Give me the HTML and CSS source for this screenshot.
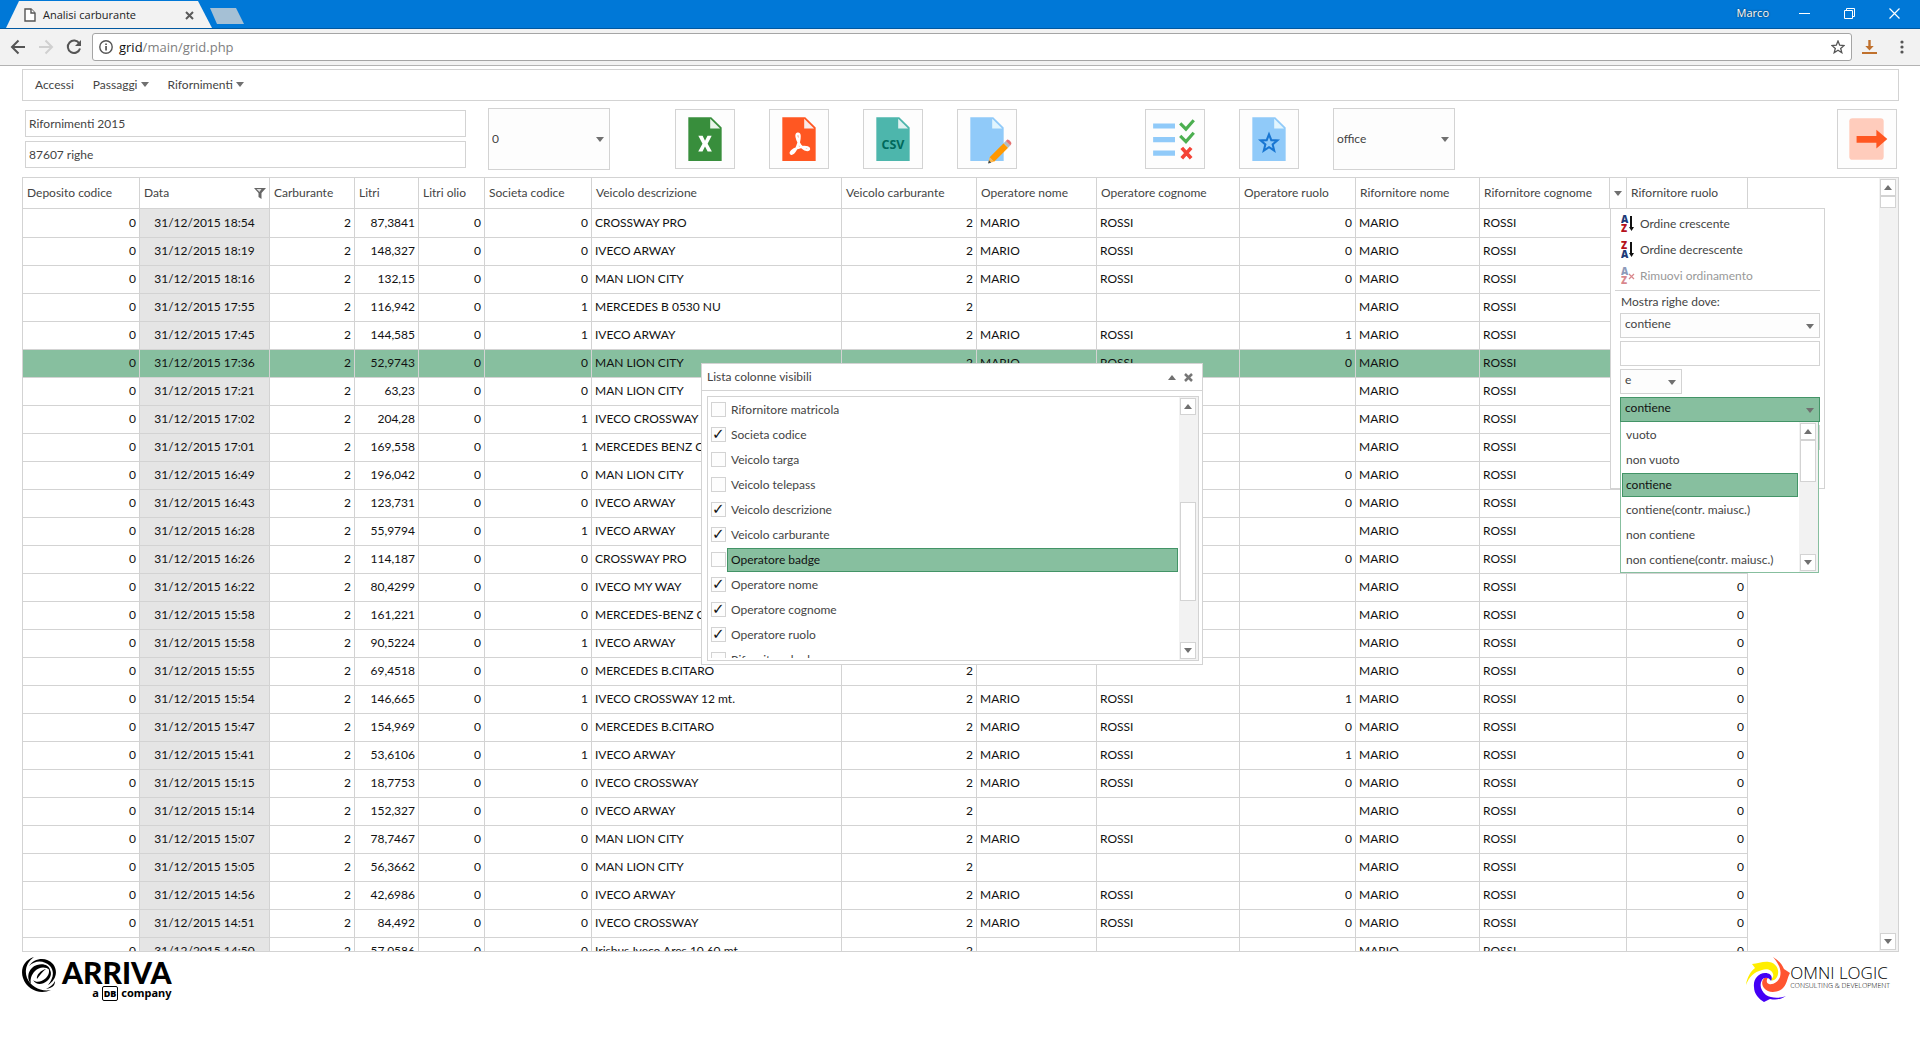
FILE: index.html
```html
<!DOCTYPE html>
<html lang="it">
<head>
<meta charset="utf-8">
<title>Analisi carburante</title>
<link rel="stylesheet" href="styles.css">
</head>
<body>
<header class="browser">
  <div class="tabstrip">
    <div class="tab">
      <svg width="12" height="14" viewBox="0 0 12 14" fill="#fff" stroke="#555" stroke-width="1.4"><path d="M1 1h6l4 4v8H1z"/><path d="M7 1v4h4" /></svg>
      <span>Analisi carburante</span>
      <button class="plain" aria-label="Chiudi scheda"><svg width="9" height="9" viewBox="0 0 9 9" stroke="#5a5a5a" stroke-width="2"><path d="M1 1l7 7M8 1L1 8"/></svg></button>
    </div>
    <button class="new-tab" aria-label="Nuova scheda"></button>
    <div class="window-controls">
      <span class="user">Marco</span>
      <button class="plain" aria-label="Riduci"><svg width="11" height="11" viewBox="0 0 11 11" stroke="#fff"><path d="M0 5.5h11"/></svg></button>
      <button class="plain" aria-label="Ripristina"><svg width="11" height="11" viewBox="0 0 11 11" fill="none" stroke="#fff"><path d="M.5 2.500h8v8h-8zM2.500 2.500v-2h8v8h-2"/></svg></button>
      <button class="plain" aria-label="Chiudi"><svg width="11" height="11" viewBox="0 0 11 11" stroke="#fff" stroke-width="1.200"><path d="M.5.5l10 10M10.500.5l-10 10"/></svg></button>
    </div>
  </div>
  <div class="navbar">
    <button class="plain" aria-label="Indietro"><svg width="16" height="16" viewBox="0 0 16 16" fill="none" stroke="#555" stroke-width="2"><path d="M15 8H2M8.500 1.500L2 8l6.500 6.500"/></svg></button>
    <button class="plain" aria-label="Avanti"><svg width="16" height="16" viewBox="0 0 16 16" fill="none" stroke="#d0d0d0" stroke-width="2"><path d="M1 8h13M7.500 1.500L14 8l-6.500 6.500"/></svg></button>
    <button class="plain" aria-label="Ricarica"><svg width="16" height="16" viewBox="0 0 16 16"><path d="M13.300 4.500A6.200 6.200 0 1 0 14 9.500" fill="none" stroke="#555" stroke-width="2"/><path d="M15 1v6H9z" fill="#555"/></svg></button>
    <div class="address">
      <svg width="14" height="14" viewBox="0 0 14 14"><circle cx="7" cy="7" r="6.200" fill="none" stroke="#555" stroke-width="1.400"/><path d="M6.200 6h1.700v4.500H6.200zM6.200 3.400h1.700V5H6.200z" fill="#555"/></svg>
      <span class="url"><b>grid</b>/main/grid.php</span>
      <button class="plain" aria-label="Preferiti"><svg width="14" height="14" viewBox="0 0 14 14" fill="none" stroke="#555" stroke-width="1.300"><path d="M7 1l1.700 4.200 4.400.3-3.400 2.900 1.100 4.300L7 10.300l-3.800 2.400 1.100-4.300L.9 5.500l4.400-.3z"/></svg></button>
    </div>
    <button class="plain" aria-label="Download"><svg width="15" height="14" viewBox="0 0 15 14" fill="#c0712d"><path d="M6.300 0h2.400v6h3L7.500 10.500 3.300 6h3zM0 12h15v2H0z"/></svg></button>
    <button class="plain menu-dots" aria-label="Menu"><svg width="4" height="14" viewBox="0 0 4 14" fill="#555"><circle cx="2" cy="2" r="1.600"/><circle cx="2" cy="7" r="1.600"/><circle cx="2" cy="12" r="1.600"/></svg></button>
  </div>
</header>

<main class="page">
  <nav class="menu">
    <a href="#accessi">Accessi</a>
    <a href="#passaggi" class="has-sub">Passaggi</a>
    <a href="#rifornimenti" class="has-sub">Rifornimenti</a>
  </nav>

  <section class="toolbar">
    <div class="titles">
      <input type="text" value="Rifornimenti 2015" aria-label="Titolo">
      <input type="text" value="87607 righe" aria-label="Numero righe">
    </div>
    <div class="combo combo-tall"><select aria-label="Livello"><option>0</option></select></div>
    <div class="tools tools-export">
      <button class="tool" aria-label="Excel"><svg viewBox="0 0 48 48"><path fill="#388e3c" d="M40 45H8V3h22l10 10z"/><path fill="#e8f5e9" d="M38.500 14H29V4.500z"/><path fill="#fff" d="M21.600 25.600l2.400-4.700h4L24.100 28.500l4.100 7.500h-4.100L24 35.800l-2.400-4.500L19.200 36H15.100l4.100-7.500-4-7.600h4.100z" transform="translate(2.400 0)"/></svg></button>
      <button class="tool" aria-label="PDF"><svg viewBox="0 0 48 48"><path fill="#ff5722" d="M40 45H8V3h22l10 10z"/><path fill="#fbe9e7" d="M38.500 14H29V4.500z"/><path fill="none" stroke="#fff" stroke-width="2.300" stroke-linejoin="round" d="M23.800 27.500c-2-4-3.200-8-1-8.600 2.300-.4 2 4 1 8.100-1.300 4.500-4.400 11.300-7 11.200-2.300-.9 1.300-4.300 5.500-5.500 4-1.300 9.900-1.800 11.200.3.800 2-3.200 2.300-6-.4-1.500-1.500-2.700-3-3.700-5.100z"/></svg></button>
      <button class="tool" aria-label="CSV"><svg viewBox="0 0 48 48"><path fill="#4db6ac" d="M40 45H8V3h22l10 10z"/><path fill="#e0f2f1" d="M38.500 14H29V4.500z"/><text x="24" y="34" text-anchor="middle" class="csv">CSV</text></svg></button>
      <button class="tool" aria-label="Modifica"><svg viewBox="0 0 48 48"><path fill="#90caf9" d="M40 45H8V3h22l10 10z"/><path fill="#e1f5fe" d="M38.500 14H29V4.500z"/><path fill="#ff9800" d="M26.500 41.500L40 28l4.300 4.300-13.500 13.500z"/><path fill="#b0bec5" d="M40 28l2-2 4.300 4.300-2 2z"/><path fill="#e57373" d="M42 26l1.300-1.300c1-1 4.700 2.500 4 4L46.300 30.300z"/><path fill="#ffb74d" d="M26.500 41.500L25.300 47l5.500-1.200z"/><path fill="#37474f" d="M25.900 44.500L25 47.500l3-.8z"/></svg></button>
    </div>
    <div class="tools tools-view">
      <button class="tool" aria-label="Colonne visibili"><svg viewBox="0 0 48 48"><path fill="#90caf9" d="M3 9h21v5H3zM3 22h21v5H3zM3 35h21v5H3z"/><g fill="none" stroke-width="3"><path stroke="#4caf50" d="M29 9l5.500 5.500L42 6M29 21l5.500 5.500L42 18"/><path stroke="#f44336" stroke-width="3.500" d="M30.500 32.500l9 10M39.500 32.500l-9 10"/></g></svg></button>
      <button class="tool" aria-label="Preferiti"><svg viewBox="0 0 48 48"><path fill="#90caf9" d="M40 45H8V3h22l10 10z"/><path fill="#e1f5fe" d="M38.500 14H29V4.500z"/><path fill="none" stroke="#1976d2" stroke-width="2" d="M24 19.500l2.200 5.600 5.800.3-4.500 3.800 1.500 5.900-5-3.300-5 3.300 1.500-5.900-4.500-3.800 5.800-.3z"/></svg></button>
    </div>
    <div class="combo combo-tall"><select aria-label="Tema"><option>office</option></select></div>
    <button class="tool tool-exit" aria-label="Esci"><svg viewBox="0 0 48 48"><rect x="7" y="4" width="33" height="40" rx="3" fill="#ffccbc"/><path fill="#ff5722" d="M43.500 24L33 15v6H14v6.500h19V33z"/></svg></button>
  </section>

  <section class="grid">
    <div class="grid-body">
      <table>
        <colgroup id="cols"></colgroup>
        <thead><tr id="heads"></tr></thead>
        <tbody id="rows"></tbody>
      </table>
    </div>
    <div class="scrollbar grid-scroll">
      <button class="up" aria-label="Su"></button><div class="thumb"></div><button class="down" aria-label="Giù"></button>
    </div>

    <div class="column-menu">
      <ul class="sort">
        <li><button><svg width="14" height="18" viewBox="0 0 14 18"><text x="0" y="8" class="az a">A</text><text x="0" y="17" class="az z">Z</text><path d="M10 1v12" stroke="#111" stroke-width="2"/><path d="M8 12h5l-2.500 4z" fill="#111"/></svg>Ordine crescente</button></li>
        <li><button><svg width="14" height="18" viewBox="0 0 14 18"><text x="0" y="8" class="az z">Z</text><text x="0" y="17" class="az a">A</text><path d="M10 1v12" stroke="#111" stroke-width="2"/><path d="M8 12h5l-2.500 4z" fill="#111"/></svg>Ordine decrescente</button></li>
        <li><button disabled><svg width="14" height="18" viewBox="0 0 14 18"><text x="0" y="8" class="az a">A</text><text x="0" y="17" class="az z">Z</text><path d="M8 7l5 5M13 7l-5 5" stroke="#b5121b" stroke-width="1.200"/></svg>Rimuovi ordinamento</button></li>
      </ul>
      <form class="filter">
        <label for="cond1">Mostra righe dove:</label>
        <div class="combo"><select id="cond1"><option>contiene</option></select></div>
        <input type="text" aria-label="Valore">
        <div class="combo combo-small"><select aria-label="Operatore"><option>e</option></select></div>
        <div class="combo combo-open"><select aria-label="Seconda condizione"><option>contiene</option></select>
          <div class="dropdown">
            <ul>
              <li>vuoto</li><li>non vuoto</li><li class="selected">contiene</li><li>contiene(contr. maiusc.)</li><li>non contiene</li><li>non contiene(contr. maiusc.)</li>
            </ul>
            <div class="scrollbar"><button type="button" class="up" aria-label="Su"></button><div class="thumb"></div><button type="button" class="down" aria-label="Giù"></button></div>
          </div>
        </div>
        <input type="text" aria-label="Secondo valore">
      </form>
    </div>
  </section>

  <section class="window">
    <header class="window-title">
      <h2>Lista colonne visibili</h2>
      <button class="plain collapse" aria-label="Comprimi"></button>
      <button class="plain" aria-label="Chiudi"><svg width="9" height="9" viewBox="0 0 9 9" stroke="#777" stroke-width="2.500"><path d="M1 1l7 7M8 1L1 8"/></svg></button>
    </header>
    <div class="checklist">
      <div class="items">
        <label><input type="checkbox"><span>Rifornitore matricola</span></label>
        <label><input type="checkbox" checked><span>Societa codice</span></label>
        <label><input type="checkbox"><span>Veicolo targa</span></label>
        <label><input type="checkbox"><span>Veicolo telepass</span></label>
        <label><input type="checkbox" checked><span>Veicolo descrizione</span></label>
        <label><input type="checkbox" checked><span>Veicolo carburante</span></label>
        <label><input type="checkbox"><span class="selected">Operatore badge</span></label>
        <label><input type="checkbox" checked><span>Operatore nome</span></label>
        <label><input type="checkbox" checked><span>Operatore cognome</span></label>
        <label><input type="checkbox" checked><span>Operatore ruolo</span></label>
        <label><input type="checkbox"><span>Rifornitore badge</span></label>
      </div>
      <div class="scrollbar"><button class="up" aria-label="Su"></button><div class="thumb"></div><button class="down" aria-label="Giù"></button></div>
    </div>
  </section>
</main>

<footer class="brands">
  <div class="arriva">
    <svg width="36" height="36" viewBox="0 0 36 36">
      <path d="M12 0C2 3-2 12 1 21 5 33 18 38 29 33 19 35 9 30 5 21 2 13 5 5 12 0z"/>
      <path d="M7 9C12 1 24-1 31 7c6 8 2 17-5 21 5-6 7-13 2-19C22 3 13 3 7 9z"/>
      <path d="M9 27C3 19 8 10 15 8c6-2 12 0 13 5-5-4-11-3-15 1-4 4-5 9-4 13z"/>
      <path d="M11 23c3 3 9 2 13-2 3-3 4-7 2-11 5 5 3 11-1 14-5 4-11 4-14-1z"/>
      <path d="M15 22c-1-4 4-9 9-10-3 2-6 6-9 10z"/>
      <path d="M24 32c4-2 7-4 9-8 0 5-3 7-9 8z"/>
    </svg>
    <div class="arriva-text"><strong>ARRIVA</strong><span>a <b class="db">DB</b> company</span></div>
  </div>
  <div class="omni">
    <svg width="44" height="46" viewBox="0 0 44 46">
      <path fill="#ffee00" d="M0 28C1 20 5 14 9 11L6 7c6 0 11-3 17-2 7 1 10 7 9 12-1 6-6 8-9 5 3 0 5-2 4-5-1-4-6-6-11-4C8 15 3 20 0 28z"/>
      <path fill="#ff5530" d="M27 0c6 4 9 7 11 12l6 4c-3 5-3 12-8 16-6 4-14 4-18-1-4-5-1-12 5-11-3 2-3 6 0 7 4 1 9-2 11-7 2-8-2-14-7-20z"/>
      <path fill="#4400f5" d="M40 39c-6 4-11 4-16 3l-6 3C13 42 8 37 8 30c-1-7 4-14 11-14 6 0 8 4 6 8-2-4-7-4-9-1-3 5-1 11 4 15 5 3 12 4 20 1z"/>
    </svg>
    <div class="omni-text"><span>OMNI LOGIC</span><small>CONSULTING &amp; DEVELOPMENT</small></div>
  </div>
</footer>
<script src="grid.js"></script>
</body>
</html>
```
FILE: styles.css
```css
:root {
  --line: #d3d3d3;
  --green: #87bf9f;
  --green-dark: #439467;
  --text: #444;
}

* { box-sizing: border-box; }

body {
  margin: 0;
  height: 100vh;
  display: flex;
  flex-direction: column;
  overflow: hidden;
  background: #fff;
  color: var(--text);
  font: 12px/16px Lato, "Liberation Sans", sans-serif;
}

button, input, select { font: inherit; color: inherit; }
button { padding: 0; }
ul { list-style: none; margin: 0; padding: 0; }
svg { display: block; }
.plain { border: 0; background: none; }

/* Browser frame */
.browser { font-family: "Open Sans", sans-serif; font-size: 11px; }
.tabstrip {
  display: flex;
  height: 29px;
  background: #0078d7;
  border-bottom: 1px solid #0058a0;
}
.tab {
  display: flex;
  align-items: center;
  gap: 7px;
  width: 206px;
  height: 28px;
  margin-left: 6px;
  padding: 2px 18px 0 18px;
  background: #f2f2f2;
  color: #222;
  clip-path: polygon(0 100%, 13px 1px, 192px 1px, 100% 100%);
}
.tab button { margin-left: auto; }
.new-tab {
  width: 34px;
  height: 16px;
  margin: 8px 0 0 -2px;
  border: 0;
  background: #a5c0d5;
  clip-path: polygon(0 0, 26px 0, 100% 100%, 7px 100%);
}
.window-controls {
  display: flex;
  align-items: center;
  gap: 34px;
  margin: 0 20px 2px auto;
}
.user { margin-right: -4px; color: #fff; text-shadow: 0 0 2px #222; }
.navbar {
  display: flex;
  align-items: center;
  gap: 12px;
  height: 37px;
  padding: 0 16px 0 10px;
  background: #f2f2f2;
  border-bottom: 1px solid #b3b3b3;
}
.address {
  flex: 1;
  display: flex;
  align-items: center;
  gap: 6px;
  height: 28px;
  margin: 0 -2px;
  padding: 0 6px;
  background: #fff;
  border: 1px solid #a5a5a5;
  border-radius: 3px;
  font-size: 13px;
}
.address button { margin-left: auto; }
.url { color: #808080; }
.url b { color: #111; font-weight: 400; }
.menu-dots { margin-left: 11px; }

/* Page */
.page {
  position: relative;
  flex: 1;
  min-height: 0;
  display: flex;
  flex-direction: column;
  padding: 3px 21px 0 22px;
}
.menu {
  display: flex;
  align-items: center;
  gap: 19px;
  height: 32px;
  flex: none;
  padding: 0 12px;
  border: 1px solid var(--line);
}
.menu a { color: inherit; text-decoration: none; }
.has-sub::after, .combo::after, .down::after, .th-menu::after {
  content: "";
  display: inline-block;
  border: 4px solid transparent;
  border-top: 5px solid #707070;
  border-bottom: 0;
}
.has-sub::after { margin: 0 0 2px 3px; }
.up::after, .collapse::after {
  content: "";
  display: block;
  border: 4px solid transparent;
  border-bottom: 5px solid #707070;
  border-top: 0;
}

.toolbar {
  display: flex;
  align-items: center;
  flex: none;
  height: 76px;
  padding: 0 2px 0 3px;
}
.titles { display: grid; gap: 4px; width: 441px; margin-right: 22px; }
input[type="text"] {
  display: block;
  width: 100%;
  height: 27px;
  padding: 0 3px;
  border: 1px solid var(--line);
  background: #fff;
}
.combo { position: relative; height: 25px; }
.combo select {
  appearance: none;
  width: 100%;
  height: 100%;
  padding: 0 4px 3px;
  border: 1px solid var(--line);
  border-radius: 0;
  background: #fdfdfd;
}
.combo::after { position: absolute; right: 6px; top: calc(50% - 2px); }
.combo-tall { width: 122px; height: 62px; }
.combo-tall select { padding: 0 3px; }
.tools { display: flex; gap: 34px; }
.tools-export { margin: 0 128px 0 65px; }
.tools-view { margin-right: 34px; }
.tool {
  display: grid;
  place-items: center;
  width: 60px;
  height: 60px;
  border: 1px solid var(--line);
  background: #fdfdfd;
}
.tool svg { width: 50px; height: 50px; }
.tool-exit { margin-left: auto; }
.csv { font: 700 12px "Open Sans", sans-serif; fill: #00695c; }

/* Grid */
.grid {
  position: relative;
  flex: 1;
  min-height: 0;
  display: flex;
  border: 1px solid var(--line);
}
.grid-body { flex: 1; min-width: 0; overflow: hidden; }
table {
  table-layout: fixed;
  width: 1725px;
  border-collapse: separate;
  border-spacing: 0;
}
th, td {
  height: 28px;
  padding: 0 3px;
  border-right: 1px solid var(--line);
  border-bottom: 1px solid var(--line);
  text-align: left;
  font-weight: 400;
  white-space: nowrap;
  overflow: hidden;
}
th { height: 31px; padding-left: 4px; }
td { padding-bottom: 1px; color: #111; }
tbody tr:first-child td { height: 29px; }
.num { text-align: right; }
.date { text-align: center; background: #e5e5e5; }
tr.selected td { background: var(--green); }
.th-inner { display: flex; align-items: center; justify-content: space-between; height: 30px; }
.th-menu {
  display: grid;
  place-items: center;
  width: 17px;
  height: 30px;
  margin-right: -3px;
  border: 0;
  border-left: 1px solid var(--line);
  background: #fff;
}

.scrollbar {
  display: flex;
  flex-direction: column;
  width: 19px;
  padding: 1px 2px 1px 1px;
  background: #f2f2f2;
}
.scrollbar button {
  display: grid;
  place-items: center;
  flex: none;
  height: 17px;
  border: 1px solid var(--line);
  background: #fff;
}
.scrollbar .thumb { border: 1px solid var(--line); background: #fff; }
.scrollbar .down { margin-top: auto; }
.grid-scroll .thumb { height: 12px; }

/* Column menu */
.column-menu {
  position: absolute;
  left: 1587px;
  top: 30px;
  width: 215px;
  height: 281px;
  padding: 2px 4px;
  border: 1px solid var(--line);
  background: #fff;
}
.sort { padding-bottom: 1px; border-bottom: 1px solid var(--line); }
.sort button {
  display: flex;
  align-items: center;
  gap: 5px;
  height: 26px;
  padding: 0 6px;
  border: 0;
  background: none;
}
.sort button:disabled { color: #999; }
.sort button:disabled svg { opacity: .5; }
.az { font: 800 10px "Open Sans", sans-serif; }
.az.a { fill: #1e3a78; }
.az.z { fill: #b5121b; }
.filter { display: grid; gap: 3px; padding: 3px 0 0 5px; }
.filter label { padding-left: 1px; }
.filter input[type="text"] { height: 25px; }
.combo-small { width: 62px; }
.combo-open select {
  background: var(--green);
  border-color: var(--green-dark);
  color: #111;
}
.dropdown {
  position: absolute;
  z-index: 2;
  top: 25px;
  left: 0;
  display: flex;
  width: 199px;
  height: 151px;
  border: 1px solid var(--green);
  border-top: 0;
  background: #fff;
}
.dropdown ul { flex: 1; padding: 1px; }
.dropdown li {
  height: 24px;
  margin-bottom: 1px;
  padding: 3px 3px;
  border: 1px solid transparent;
  white-space: nowrap;
}
.dropdown .thumb { height: 42px; }
.selected { color: #111; }
.dropdown .selected, .items .selected {
  background: var(--green);
  border-color: var(--green-dark);
}

/* Column list window */
.window {
  position: absolute;
  z-index: 3;
  left: 701px;
  top: 297px;
  width: 502px;
  border: 1px solid var(--line);
  background: #fff;
}
.window-title {
  display: flex;
  align-items: center;
  gap: 8px;
  height: 27px;
  padding: 0 9px 0 5px;
  border-bottom: 1px solid var(--line);
}
.window-title h2 { margin: 0 auto 0 0; font-size: 12px; font-weight: 400; }
.checklist {
  display: flex;
  height: 265px;
  margin: 5px 3px 3px 5px;
  border: 1px solid var(--line);
}
.items { flex: 1; height: 261px; padding: 0 1px 0 3px; overflow: hidden; }
.items label { display: flex; align-items: center; height: 25px; }
.items input {
  appearance: none;
  width: 15px;
  height: 15px;
  margin: 0 1px 0 0;
  border: 1px solid var(--line);
  background: #fdfdfd;
}
.items input:checked::before {
  content: "✓";
  display: block;
  color: #111;
  font: 15px/13px "DejaVu Sans", sans-serif;
}
.items span { flex: 1; height: 24px; padding: 3px; border: 1px solid transparent; }
.checklist .up { margin-bottom: 87px; }
.checklist .thumb { height: 99px; }

/* Footer */
.brands {
  display: flex;
  justify-content: space-between;
  flex: none;
  height: 88px;
  padding: 5px 30px 0 22px;
  color: #000;
}
.arriva { display: flex; gap: 4px; }
.arriva-text { display: grid; align-content: start; justify-items: end; }
.arriva-text strong { font: 900 30px/30px Lato, sans-serif; }
.arriva-text span { font: 700 11px/12px "Noto Sans", sans-serif; }
.arriva-text .db { padding: 0 1px; border: 1px solid #000; border-radius: 2px; font-size: 9px; line-height: 8px; }
.omni { display: flex; }
.omni-text { display: grid; align-content: start; padding-top: 7px; }
.omni-text span { font: 300 17px/18px "Open Sans", sans-serif; }
.omni-text small { font: 300 7px/8px "Open Sans", sans-serif; white-space: nowrap; }
```
FILE: grid.js
```js
const columns = [
  ["Deposito codice", 117, "num"], ["Data", 130, "date"], ["Carburante", 85, "num"],
  ["Litri", 64, "num"], ["Litri olio", 66, "num"], ["Societa codice", 107, "num"],
  ["Veicolo descrizione", 250, ""], ["Veicolo carburante", 135, "num"],
  ["Operatore nome", 120, ""], ["Operatore cognome", 143, ""], ["Operatore ruolo", 116, "num"],
  ["Rifornitore nome", 124, ""], ["Rifornitore cognome", 147, ""], ["Rifornitore ruolo", 121, "num"]
];

// time, litri, societa, veicolo, ruolo operatore (empty when there is no operator)
const data = [
  ["18:54", "87,3841", 0, "CROSSWAY PRO", "0"],
  ["18:19", "148,327", 0, "IVECO ARWAY", "0"],
  ["18:16", "132,15", 0, "MAN LION CITY", "0"],
  ["17:55", "116,942", 1, "MERCEDES B 0530 NU", ""],
  ["17:45", "144,585", 1, "IVECO ARWAY", "1"],
  ["17:36", "52,9743", 0, "MAN LION CITY", "0"],
  ["17:21", "63,23", 0, "MAN LION CITY", ""],
  ["17:02", "204,28", 1, "IVECO CROSSWAY 12 mt.", ""],
  ["17:01", "169,558", 1, "MERCEDES BENZ O530", ""],
  ["16:49", "196,042", 0, "MAN LION CITY", "0"],
  ["16:43", "123,731", 0, "IVECO ARWAY", "0"],
  ["16:28", "55,9794", 1, "IVECO ARWAY", ""],
  ["16:26", "114,187", 0, "CROSSWAY PRO", "0"],
  ["16:22", "80,4299", 0, "IVECO MY WAY", ""],
  ["15:58", "161,221", 0, "MERCEDES-BENZ O 405", ""],
  ["15:58", "90,5224", 1, "IVECO ARWAY", ""],
  ["15:55", "69,4518", 0, "MERCEDES B.CITARO", ""],
  ["15:54", "146,665", 1, "IVECO CROSSWAY 12 mt.", "1"],
  ["15:47", "154,969", 0, "MERCEDES B.CITARO", "0"],
  ["15:41", "53,6106", 1, "IVECO ARWAY", "1"],
  ["15:15", "18,7753", 0, "IVECO CROSSWAY", "0"],
  ["15:14", "152,327", 0, "IVECO ARWAY", ""],
  ["15:07", "78,7467", 0, "MAN LION CITY", "0"],
  ["15:05", "56,3662", 0, "MAN LION CITY", ""],
  ["14:56", "42,6986", 0, "IVECO ARWAY", "0"],
  ["14:51", "84,492", 0, "IVECO CROSSWAY", "0"],
  ["14:50", "57,0586", 0, "Irisbus Iveco Ares 10.60 mt.", ""]
];

const funnel = '<svg width="12" height="11" viewBox="0 0 12 11"><path d="M0 0h12L7.500 5v6L4.500 9V5z" fill="#666"/><path d="M2.500 1h5L5.500 4z" fill="#ddd"/></svg>';
const extras = {
  "Data": funnel,
  "Rifornitore cognome": '<button class="th-menu" aria-label="Menu colonna"></button>'
};

document.getElementById("cols").innerHTML =
  columns.map(([, width]) => `<col style="width:${width}px">`).join("");
document.getElementById("heads").innerHTML =
  columns.map(([name]) => `<th><div class="th-inner">${name}${extras[name] || ""}</div></th>`).join("");
document.getElementById("rows").innerHTML = data.map(([time, litri, societa, veicolo, ruolo]) => {
  const cells = [0, "31/12/2015 " + time, 2, litri, 0, societa, veicolo, 2,
    ruolo && "MARIO", ruolo && "ROSSI", ruolo, "MARIO", "ROSSI", 0];
  const selected = time === "17:36" ? ' class="selected"' : "";
  return `<tr${selected}>` + cells.map((value, i) => `<td class="${columns[i][2]}">${value}</td>`).join("") + "</tr>";
}).join("");
```
